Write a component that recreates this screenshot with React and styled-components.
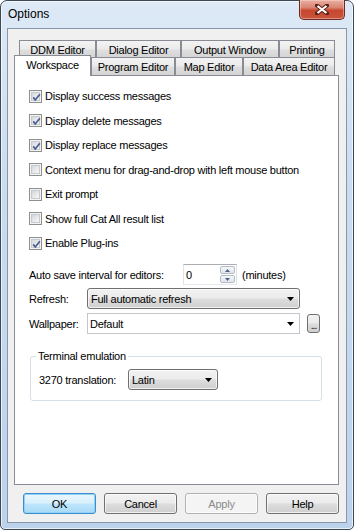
import styled, { createGlobalStyle } from 'styled-components'

const GlobalStyle = createGlobalStyle`
  html, body {
    margin: 0;
    padding: 0;
    background: #ffffff;
  }
  body {
    font-family: "Liberation Sans", Arial, sans-serif;
    font-size: 11px;
    letter-spacing: -0.25px;
    color: #000;
  }
`

const Frame = styled.div`
  box-sizing: border-box;
  width: 354px;
  height: 530px;
  border: 1px solid #3d4957;
  border-radius: 7px 7px 5px 5px;
  background: linear-gradient(180deg, #dde9f6 0%, #cadcf0 35%, #bcd2eb 100%);
  box-shadow: inset 0 0 0 1px rgba(255, 255, 255, 0.65);
  padding: 0 6px 6px 6px;
  display: flex;
  flex-direction: column;
`

const TitleBar = styled.div`
  height: 27px;
  display: flex;
  align-items: flex-start;
  justify-content: space-between;
`

const Title = styled.div`
  font-size: 12px;
  letter-spacing: 0;
  line-height: 27px;
  padding-left: 1px;
`

const CloseButton = styled.div`
  box-sizing: border-box;
  width: 46px;
  height: 20px;
  margin: -1px 2px 0 0;
  border: 1px solid #6b2b22;
  border-top: none;
  border-radius: 0 0 5px 5px;
  background: linear-gradient(180deg, #eab0a3 0%, #d98472 40%, #c7472f 55%, #c9553c 100%);
  box-shadow: inset 0 0 0 1px rgba(255, 220, 210, 0.45);
  display: flex;
  align-items: center;
  justify-content: center;
`

const Client = styled.div`
  flex: 1;
  border: 1px solid #8797ab;
  background: #f0f0f0;
  padding: 11px 7px 8px 6px;
  display: flex;
  flex-direction: column;
`

const TabRow = styled.div`
  display: flex;
  align-items: flex-start;
  height: ${p => p.$h}px;
  padding-left: ${p => p.$indent}px;
`

const Tab = styled.div`
  box-sizing: border-box;
  flex: none;
  width: ${p => p.$w}px;
  height: ${p => (p.$selected ? 21 : 18)}px;
  margin-top: ${p => (p.$selected ? -2 : 0)}px;
  padding-bottom: ${p => (p.$selected ? 2 : 0)}px;
  border: 1px solid #898c95;
  border-bottom: none;
  background: ${p =>
    p.$selected ? '#ffffff' : 'linear-gradient(180deg, #f3f3f3 0%, #ebebeb 45%, #dedede 55%, #d4d4d4 100%)'};
  position: relative;
  z-index: ${p => (p.$selected ? 2 : 1)};
  display: flex;
  align-items: center;
  justify-content: center;
  white-space: nowrap;
`

const Panel = styled.div`
  box-sizing: border-box;
  width: 325px;
  height: 410px;
  border: 1px solid #898c95;
  background: #ffffff;
  padding: 8px 14px 0 14px;
`

const CheckRow = styled.div`
  height: 24.5px;
  display: flex;
  align-items: center;
  gap: 3px;
`

const Box = styled.span`
  box-sizing: border-box;
  width: 13px;
  height: 13px;
  border: 1px solid #8e8f8f;
  background: #f4f4f4;
  padding: 1px;
  display: flex;
  position: relative;
`

const BoxInner = styled.span`
  flex: 1;
  border: 1px solid #c6cacf;
  background: linear-gradient(135deg, #d4d7dc 0%, #eaebed 60%, #f7f7f7 100%);
`

const Tick = styled.svg`
  position: absolute;
  left: 0;
  top: 0;
`

const FieldRow = styled.div`
  height: 21px;
  margin-top: ${p => p.$mt}px;
  display: flex;
  align-items: center;
`

const Label = styled.span`
  width: ${p => p.$w}px;
  flex: none;
  white-space: nowrap;
`

const SpinEdit = styled.div`
  box-sizing: border-box;
  width: 54px;
  height: 21px;
  border: 1px solid #abadb3;
  border-color: #abadb3 #dbdfe6 #e3e9ef #e2e3ea;
  background: #fff;
  display: flex;
  align-items: stretch;
`

const SpinText = styled.span`
  flex: 1;
  padding-left: 2px;
  display: flex;
  align-items: center;
`

const SpinButtons = styled.div`
  width: 15px;
  display: flex;
  flex-direction: column;
  padding: 1px 1px 1px 0;
  gap: 1px;
`

const SpinHalf = styled.div`
  flex: 1;
  box-sizing: border-box;
  border: 1px solid #b5bcc7;
  border-radius: 2px;
  background: linear-gradient(180deg, #f6f7f9, #e0e4ea);
  display: flex;
  align-items: center;
  justify-content: center;
`

const Suffix = styled.span`
  margin-left: 5px;
`

const Combo = styled.div`
  box-sizing: border-box;
  width: ${p => p.$w}px;
  height: ${p => p.$h || 21}px;
  border: 1px solid ${p => (p.$editable ? '#c3c6cb' : '#707070')};
  border-radius: ${p => (p.$editable ? 0 : 3)}px;
  background: ${p =>
    p.$editable ? '#ffffff' : 'linear-gradient(180deg, #f2f2f2 0%, #ebebeb 48%, #dddddd 52%, #cfcfcf 100%)'};
  box-shadow: ${p => (p.$editable ? 'none' : 'inset 0 0 0 1px rgba(255,255,255,0.7)')};
  padding: 0 5px 0 ${p => (p.$editable ? 2 : 3)}px;
  display: flex;
  align-items: center;
  justify-content: space-between;
`

const DotsButton = styled.div`
  box-sizing: border-box;
  width: 13px;
  height: 19px;
  margin-left: 7px;
  border: 1px solid #707070;
  border-radius: 3px;
  background: linear-gradient(180deg, #f2f2f2 0%, #ebebeb 48%, #dddddd 52%, #cfcfcf 100%);
  display: flex;
  align-items: flex-end;
  justify-content: center;
  font-size: 10px;
  line-height: 12px;
  letter-spacing: -1px;
`

const Group = styled.fieldset`
  box-sizing: border-box;
  width: 292px;
  height: 51px;
  margin: 16px 0 0 1px;
  padding: 6px 0 0 8px;
  border: 1px solid #d5dfe5;
  border-radius: 3px;
`

const Legend = styled.legend`
  padding: 0 2px;
  margin-left: -3px;
  line-height: 13px;
`

const GroupRow = styled.div`
  height: 21px;
  display: flex;
  align-items: center;
`

const ButtonBar = styled.div`
  margin-top: 8px;
  padding-left: 9px;
  display: flex;
  gap: 8px;
`

const Button = styled.div`
  box-sizing: border-box;
  width: 73px;
  height: 21px;
  border: 1px solid ${p => (p.$default ? '#3c8ccf' : p.$disabled ? '#adb2b5' : '#707070')};
  border-radius: 3px;
  color: ${p => (p.$disabled ? '#8a8a8a' : '#000')};
  background: ${p =>
    p.$default
      ? 'linear-gradient(180deg, #eaf6fd 0%, #d9f0fc 48%, #bee6fd 52%, #a7d9f5 100%)'
      : p.$disabled
      ? '#f4f4f4'
      : 'linear-gradient(180deg, #f2f2f2 0%, #ebebeb 48%, #dddddd 52%, #cfcfcf 100%)'};
  box-shadow: ${p => (p.$default ? 'inset 0 0 0 1px #8fd3f7' : 'inset 0 0 0 1px rgba(255,255,255,0.7)')};
  display: flex;
  align-items: center;
  justify-content: center;
`

function Arrow() {
  return (
    <svg width="7" height="4" viewBox="0 0 7 4">
      <path d="M0 0 H7 L3.5 4 Z" fill="#000" />
    </svg>
  )
}

function SpinArrow({ up }) {
  return (
    <svg width="5" height="3" viewBox="0 0 5 3">
      <path d={up ? 'M0 3 L2.5 0 L5 3 Z' : 'M0 0 L5 0 L2.5 3 Z'} fill="#4d6185" />
    </svg>
  )
}

function CheckBox({ checked, label }) {
  return (
    <CheckRow>
      <Box>
        <BoxInner />
        {checked && (
          <Tick width="13" height="13" viewBox="0 0 13 13">
            <path d="M3.2 6.4 L5.3 9 L9.8 3.2" fill="none" stroke="#4a5d8f" strokeWidth="1.7" />
          </Tick>
        )}
      </Box>
      <span>{label}</span>
    </CheckRow>
  )
}

const backTabs = [
  ['DDM Editor', 77],
  ['Dialog Editor', 85],
  ['Output Window', 98],
  ['Printing', 56],
]

const frontTabs = [
  ['Workspace', 77, true],
  ['Program Editor', 84],
  ['Map Editor', 68],
  ['Data Area Editor', 92],
]

const options = [
  ['Display success messages', true],
  ['Display delete messages', true],
  ['Display replace messages', true],
  ['Context menu for drag-and-drop with left mouse button', false],
  ['Exit prompt', false],
  ['Show full Cat All result list', false],
  ['Enable Plug-ins', true],
]

export default function App() {
  return (
    <>
      <GlobalStyle />
      <Frame>
        <TitleBar>
          <Title>Options</Title>
          <CloseButton>
            <svg width="14" height="11" viewBox="0 0 14 11">
              <path
                d="M2 1.5 L12 9.5 M12 1.5 L2 9.5"
                stroke="#5a2018"
                strokeWidth="4"
                strokeLinecap="square"
              />
              <path d="M2.5 2 L11.5 9 M11.5 2 L2.5 9" stroke="#ffffff" strokeWidth="2.2" />
            </svg>
          </CloseButton>
        </TitleBar>
        <Client>
          <TabRow $h={17} $indent={5}>
            {backTabs.map(([name, w]) => (
              <Tab key={name} $w={w}>
                {name}
              </Tab>
            ))}
          </TabRow>
          <TabRow $h={18} $indent={0}>
            {frontTabs.map(([name, w, sel]) => (
              <Tab key={name} $w={w} $selected={sel}>
                {name}
              </Tab>
            ))}
          </TabRow>
          <Panel>
            {options.map(([label, checked]) => (
              <CheckBox key={label} label={label} checked={checked} />
            ))}
            <FieldRow $mt={8.5}>
              <Label $w={154}>Auto save interval for editors:</Label>
              <SpinEdit>
                <SpinText>0</SpinText>
                <SpinButtons>
                  <SpinHalf>
                    <SpinArrow up />
                  </SpinHalf>
                  <SpinHalf>
                    <SpinArrow />
                  </SpinHalf>
                </SpinButtons>
              </SpinEdit>
              <Suffix>(minutes)</Suffix>
            </FieldRow>
            <FieldRow $mt={3}>
              <Label $w={58}>Refresh:</Label>
              <Combo $w={213}>
                <span>Full automatic refresh</span>
                <Arrow />
              </Combo>
            </FieldRow>
            <FieldRow $mt={4}>
              <Label $w={58}>Wallpaper:</Label>
              <Combo $w={213} $editable>
                <span>Default</span>
                <Arrow />
              </Combo>
              <DotsButton>...</DotsButton>
            </FieldRow>
            <Group>
              <Legend>Terminal emulation</Legend>
              <GroupRow>
                <Label $w={89}>3270 translation:</Label>
                <Combo $w={90}>
                  <span>Latin</span>
                  <Arrow />
                </Combo>
              </GroupRow>
            </Group>
          </Panel>
          <ButtonBar>
            <Button $default>OK</Button>
            <Button>Cancel</Button>
            <Button $disabled>Apply</Button>
            <Button>Help</Button>
          </ButtonBar>
        </Client>
      </Frame>
    </>
  )
}
